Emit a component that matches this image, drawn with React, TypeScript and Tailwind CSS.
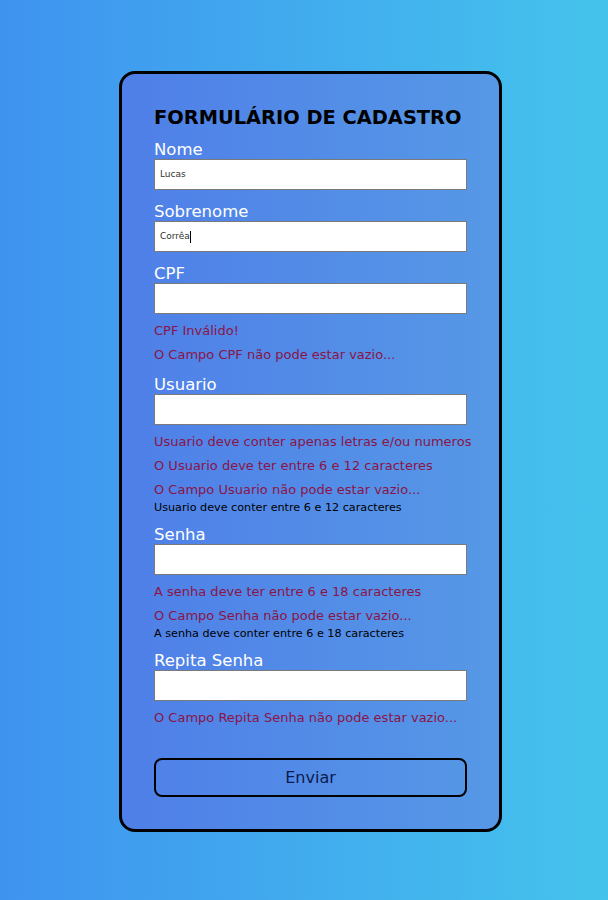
import React from "react";

const font = { fontFamily: '"DejaVu Sans", Verdana, sans-serif' };

function Label({ children }: { children: React.ReactNode }) {
  return <div className="h-[18px] text-[16.5px] leading-[18px] text-white whitespace-nowrap">{children}</div>;
}

function Input({ value }: { value?: string }) {
  return (
    <div className="h-[31px] w-full border border-[#7a7a7a] bg-white flex items-center px-[5px] text-[9px] text-[#333]">
      {value}
    </div>
  );
}

function Err({ children }: { children: React.ReactNode }) {
  return <div className="h-[24px] pt-[9px] text-[13px] leading-[15px] text-[#8a1448] whitespace-nowrap">{children}</div>;
}

function Hint({ children }: { children: React.ReactNode }) {
  return <div className="h-[18px] pt-[4px] text-[11.2px] leading-[14px] text-black whitespace-nowrap">{children}</div>;
}

export default function App() {
  return (
    <div
      className="min-h-[900px] w-full flex justify-center pl-[13px] pt-[71px] bg-gradient-to-r from-[#3f93ef] to-[#45c3ec]"
      style={font}
    >
      <div className="w-[383px] h-fit border-[3px] border-black rounded-[16px] bg-gradient-to-r from-[#4f7fe8] to-[#5698e6] px-[32px] pt-[32px] pb-[32px] flex flex-col">
        <div className="h-[24px] text-[19.4px] leading-[24px] font-bold text-black whitespace-nowrap">FORMULÁRIO DE CADASTRO</div>
        <div className="h-[11px]" />
        <Label>Nome</Label>
        <Input value="Lucas" />
        <div className="h-[13px]" />
        <Label>Sobrenome</Label>
        <div className="h-[31px] w-full border border-[#7a7a7a] bg-white flex items-center px-[5px] text-[9px] text-[#333]">
          Corrêa<span className="inline-block w-px h-[12px] bg-black" />
        </div>
        <div className="h-[13px]" />
        <Label>CPF</Label>
        <Input />
        <Err>CPF Inválido!</Err>
        <Err>O Campo CPF não pode estar vazio...</Err>
        <div className="h-[14px]" />
        <Label>Usuario</Label>
        <Input />
        <Err>Usuario deve conter apenas letras e/ou numeros</Err>
        <Err>O Usuario deve ter entre 6 e 12 caracteres</Err>
        <Err>O Campo Usuario não pode estar vazio...</Err>
        <Hint>Usuario deve conter entre 6 e 12 caracteres</Hint>
        <div className="h-[11px]" />
        <Label>Senha</Label>
        <Input />
        <Err>A senha deve ter entre 6 e 18 caracteres</Err>
        <Err>O Campo Senha não pode estar vazio...</Err>
        <Hint>A senha deve conter entre 6 e 18 caracteres</Hint>
        <div className="h-[11px]" />
        <Label>Repita Senha</Label>
        <Input />
        <Err>O Campo Repita Senha não pode estar vazio...</Err>
        <div className="h-[33px]" />
        <button className="h-[39px] w-full border-2 border-black rounded-[8px] bg-transparent text-[16px] text-[#0b1b4d]" style={font}>
          Enviar
        </button>
      </div>
    </div>
  );
}
